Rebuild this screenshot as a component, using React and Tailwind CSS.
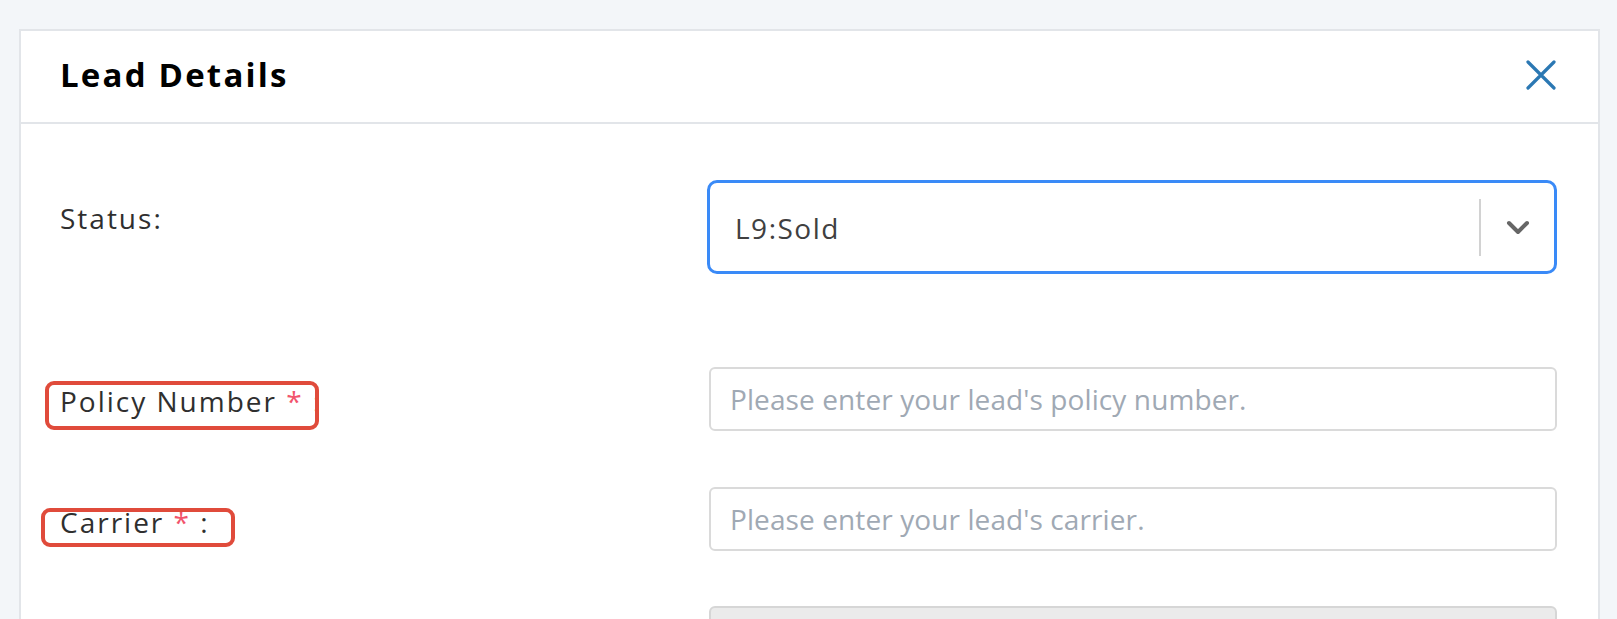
import React from 'react';

const font = { fontFamily: "'Open Sans', 'Liberation Sans', sans-serif" };

function Label({ children, box }) {
  return (
    <div className="relative inline-block text-[28px] leading-[40px] tracking-[2px] text-[#2f2f2f]">
      {children}
      {box && <span className={`absolute rounded-[9px] border-4 border-[#e04b3b] ${box}`} />}
    </div>
  );
}

function Req() {
  return <span className="text-[#f2546c]">*</span>;
}

export default function App() {
  return (
    <div className="h-[619px] overflow-hidden bg-[#f3f6f9] pl-[19px] pt-[29px] pr-[17px]" style={font}>
      <div className="border-2 border-[#e2e5e9] bg-white">
        {/* Header */}
        <div className="flex h-[93px] items-center justify-between border-b-2 border-[#e2e5e9] pl-[39px] pr-[41px]">
          <h1 className="-mt-[5px] text-[33px] font-bold leading-none tracking-[2.2px] text-black">Lead Details</h1>
          <button className="-mt-[3px] flex h-[32px] w-[32px] items-center justify-center text-[#2b78b3]">
            <svg width="30" height="30" viewBox="0 0 30 30" fill="none" stroke="currentColor" strokeWidth="3.2" strokeLinecap="round">
              <path d="M2 2L28 28M28 2L2 28" />
            </svg>
          </button>
        </div>

        {/* Body */}
        <div className="flex flex-col pl-[39px] pr-[41px] pt-[56px] pb-[40px]">
          <div className="flex items-start">
            <div className="w-[647px] shrink-0 pt-[18px]">
              <Label>Status:</Label>
            </div>
            <div className="flex h-[94px] flex-1 items-center rounded-[10px] border-[3px] border-[#3a8af7] pl-[25px]">
              <span className="mt-[2px] flex-1 text-[28px] tracking-[1.5px] text-[#404040]">L9:Sold</span>
              <div className="h-[57px] w-[2px] bg-[#d2d2d2]" />
              <div className="flex w-[73px] items-center justify-center text-[#666]">
                <svg width="24" height="15" viewBox="0 0 24 15" fill="none" stroke="currentColor" strokeWidth="4" strokeLinecap="round" strokeLinejoin="round">
                  <path d="M3 3l9 9 9-9" />
                </svg>
              </div>
            </div>
          </div>

          <div className="mt-[93px] flex items-start">
            <div className="w-[647px] shrink-0 pt-[14px]">
              <Label box="-left-[15px] top-0 w-[274px] h-[49px]">
                Policy Number <Req /> :
              </Label>
            </div>
            <input
              className="ml-[2px] h-[64px] flex-1 rounded-[6px] border-2 border-[#dadada] px-[19px] text-[28px] tracking-[0.1px] outline-none placeholder:text-[#a0a9b4]"
              placeholder="Please enter your lead's policy number."
            />
          </div>

          <div className="mt-[56px] flex items-start">
            <div className="w-[647px] shrink-0 pt-[15px]">
              <Label box="-left-[19px] top-[6px] w-[194px] h-[39px]">
                Carrier <Req /> :
              </Label>
            </div>
            <input
              className="ml-[2px] h-[64px] flex-1 rounded-[6px] border-2 border-[#dadada] px-[19px] text-[28px] tracking-[0.1px] outline-none placeholder:text-[#a0a9b4]"
              placeholder="Please enter your lead's carrier."
            />
          </div>

          <div className="mt-[55px] flex items-start">
            <div className="w-[647px] shrink-0" />
            <div className="ml-[2px] h-[64px] flex-1 rounded-[6px] border-2 border-[#d6d6d6] bg-[#ebebeb]" />
          </div>
        </div>
      </div>
    </div>
  );
}
